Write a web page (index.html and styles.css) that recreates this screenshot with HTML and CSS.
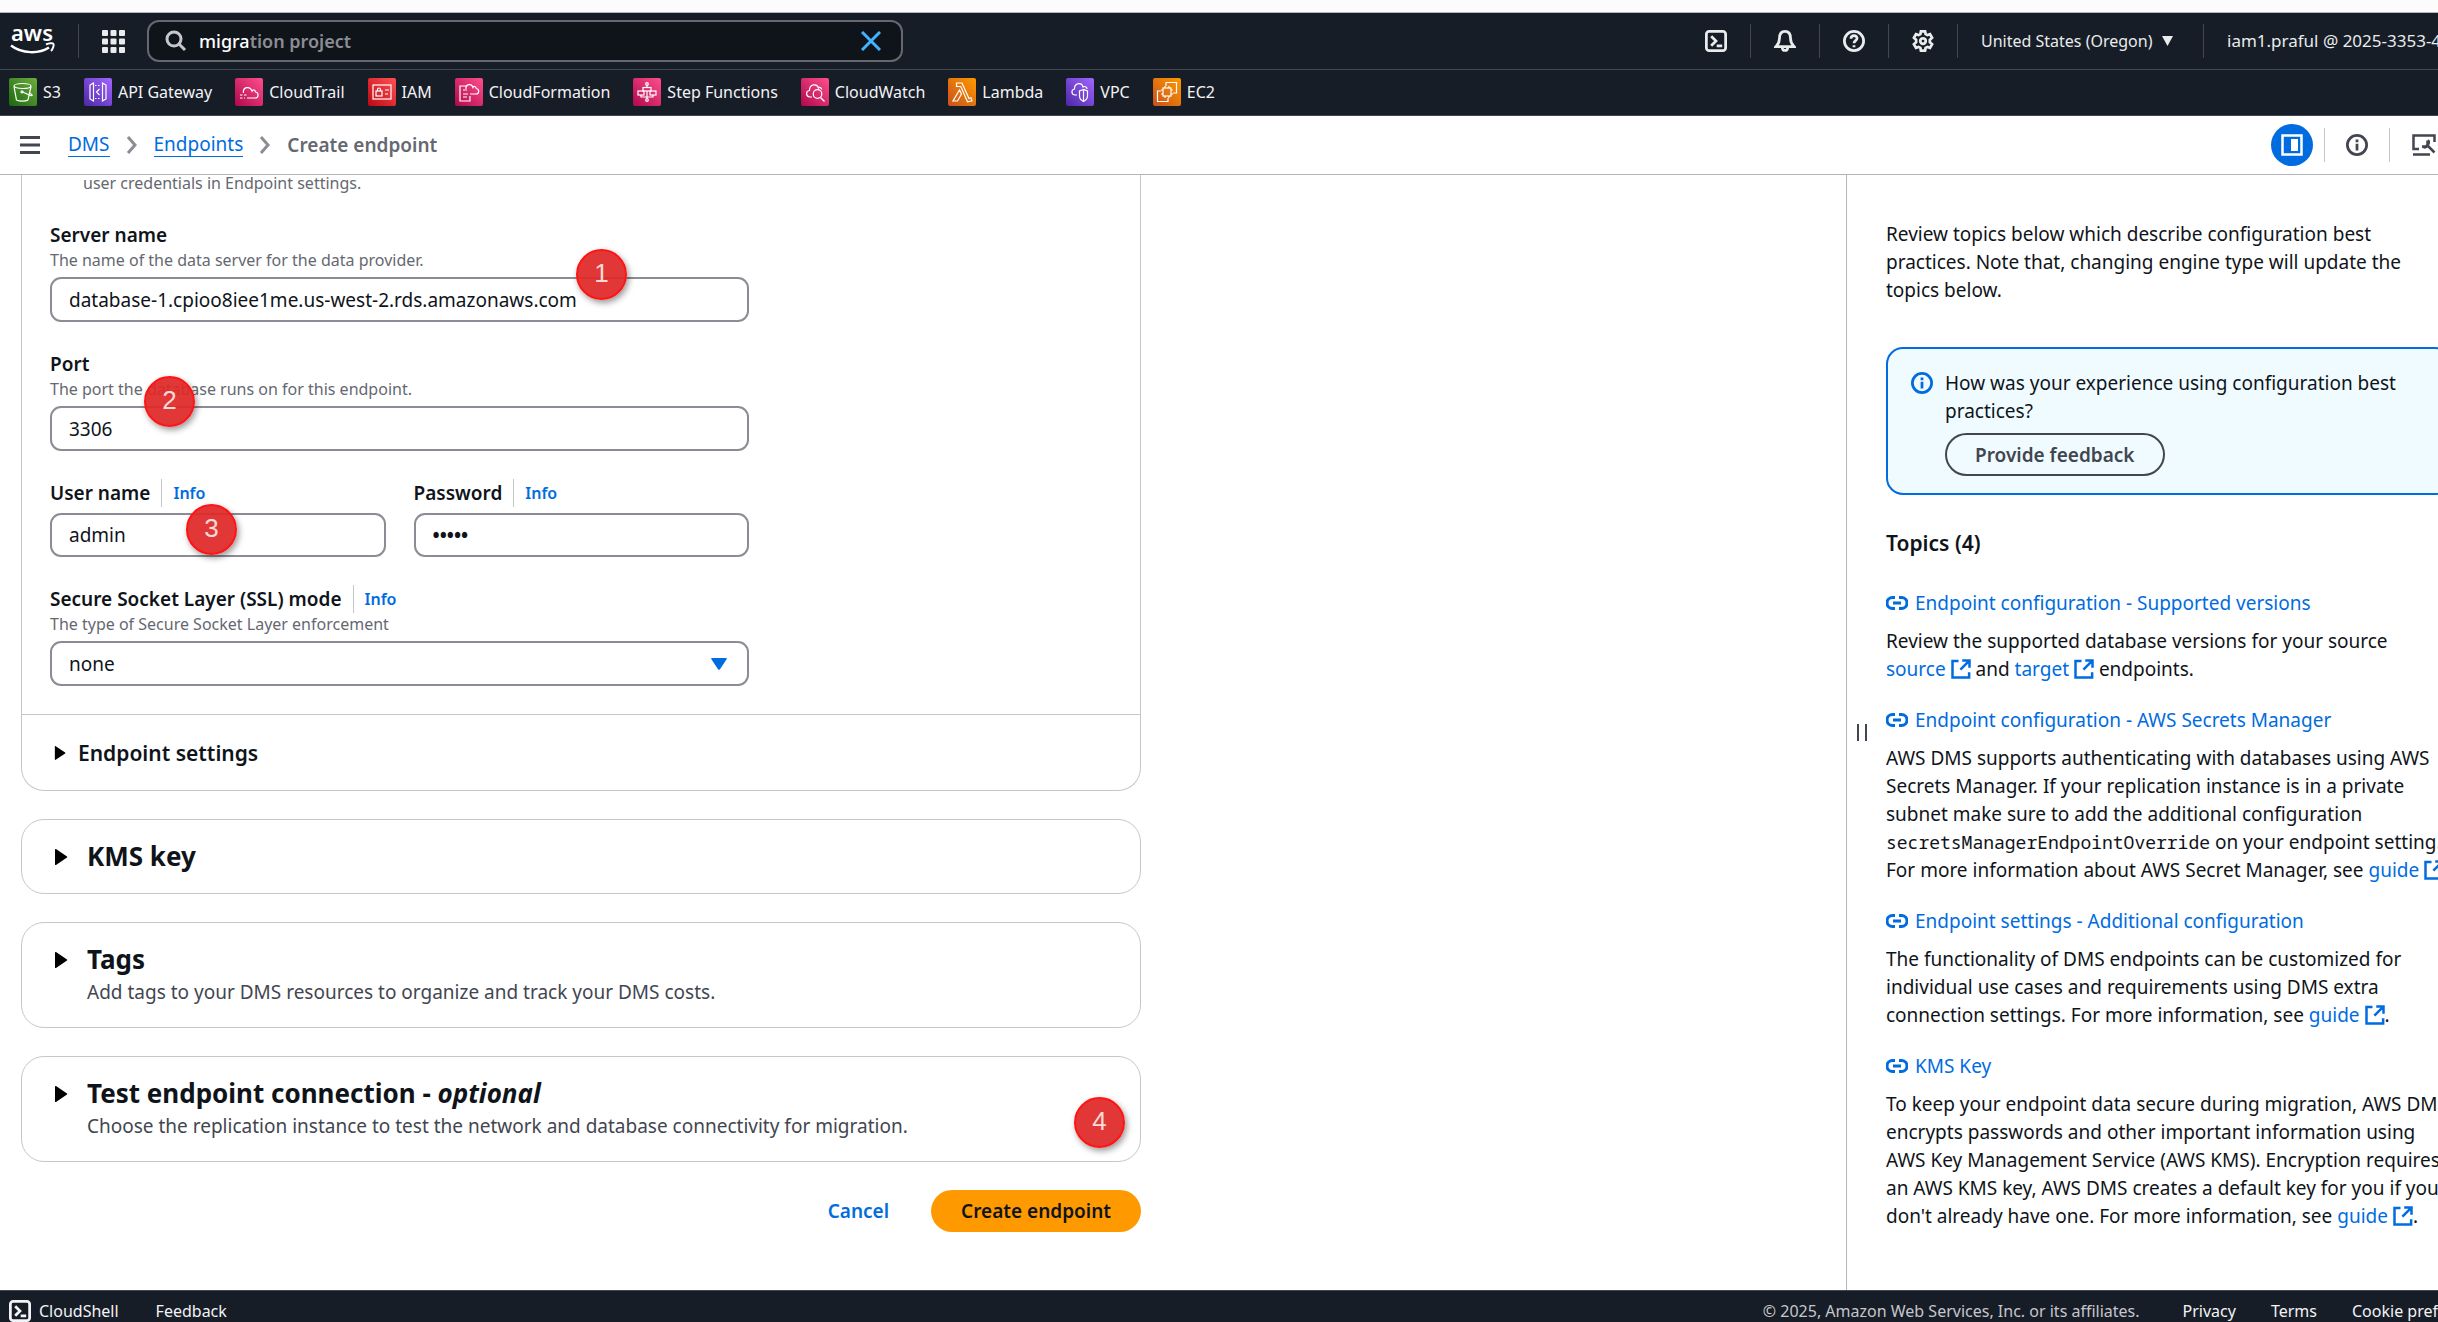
FILE: index.html
```html
<!DOCTYPE html>
<html lang="en">
<head>
<meta charset="utf-8">
<title>Create endpoint | DMS</title>
<link rel="stylesheet" href="styles.css">
</head>
<body>
<svg class="defs" aria-hidden="true">
  <symbol id="i-shell" viewBox="0 0 16 16"><rect x="1" y="1" width="14" height="14" rx="2"/><path d="M4.5 4.5 8 8l-3.500 3.500M8.500 11.500h4"/></symbol>
  <symbol id="i-ext" viewBox="0 0 16 16"><path d="M6 1.500H1.200v13.300h13.300V10.500M9 1.200h5.800V7M14.500 1.500 7.500 8.500"/></symbol>
  <symbol id="i-link" viewBox="0 0 22 16"><path d="M9 2.500H6.500a5.500 5.500 0 0 0 0 11H9M13 2.500h2.500a5.500 5.500 0 0 1 0 11H13M7 8h8"/></symbol>
  <symbol id="i-info" viewBox="0 0 16 16"><circle cx="8" cy="8" r="7"/><path d="M8 7v5M8 4v2"/></symbol>
  <symbol id="i-chev" viewBox="0 0 12 18"><path d="m2 1 7 8-7 8"/></symbol>
  <symbol id="i-caret" viewBox="0 0 14 18"><path d="M1 1.500v15c0 .5.600.700 1 .4l11-7.300c.4-.3.400-.9 0-1.200L2 1.100c-.4-.3-1-.1-1 .4z"/></symbol>
</svg>
<div class="app">
  <div class="strip"></div>
  <header class="topnav">
    <a class="logo" href="#" aria-label="AWS home">
      <svg width="46" height="46" viewBox="0 0 46 46"><text x="1" y="23" class="logo-text">aws</text><path d="M1 27.500c11 8.500 28 8.500 38 2" fill="none" stroke="#fff" stroke-width="2.500"/><path d="M36 26.500c3-1.500 7-1.500 7.500-.6.600 1-.4 5-2.500 7.100" fill="none" stroke="#fff" stroke-width="2"/></svg>
    </a>
    <span class="sep"></span>
    <button class="iconbtn grid-btn" aria-label="Services">
      <svg width="23" height="23" viewBox="0 0 23 23" fill="#e9ebed"><g id="r"><rect width="6" height="6" rx="1"/><rect x="8.500" width="6" height="6" rx="1"/><rect x="17" width="6" height="6" rx="1"/></g><use href="#r" y="8.500"/><use href="#r" y="17"/></svg>
    </button>
    <div class="search">
      <svg class="ln" width="22" height="22" viewBox="0 0 22 22"><circle cx="9" cy="9" r="7" stroke-width="3"/><path d="m14 14 6 6" stroke-width="3"/></svg>
      <label class="search-text"><input class="search-input" type="text" value="migra" aria-label="Search"><span>tion project</span></label>
      <button class="iconbtn clear" aria-label="Clear search"><svg width="20" height="20" viewBox="0 0 20 20"><path d="m1 1 18 18M19 1 1 19"/></svg></button>
    </div>
    <div class="tools">
      <button class="iconbtn tool" aria-label="CloudShell"><svg class="ln" width="22" height="22"><use href="#i-shell"/></svg></button>
      <button class="iconbtn tool" aria-label="Notifications"><svg class="ln" width="22" height="22" viewBox="0 0 16 16"><path d="M8 1C5 1 4 3.500 4 6c0 3-1 4.500-2.500 6h13C13 10.500 12 9 12 6c0-2.500-1-5-4-5zM6 12.500c0 3.200 4 3.200 4 0"/></svg></button>
      <button class="iconbtn tool" aria-label="Help"><svg class="ln" width="22" height="22" viewBox="0 0 16 16"><circle cx="8" cy="8" r="7"/><path d="M5.800 6.400C5.800 3.300 10.300 3.500 10.200 6.200 10.100 7.700 8 7.800 8 9.600M8 11v1.600"/></svg></button>
      <button class="iconbtn tool" aria-label="Settings"><svg class="ln" width="22" height="22" viewBox="0 0 16 16"><path d="M6.500 1h3l.4 2 1.300.700 1.900-.7 1.500 2.600L13 7.200v1.600l1.600 1.600-1.500 2.600-1.900-.7-1.300.700-.4 2h-3l-.4-2-1.300-.7-1.900.7-1.500-2.600L3 8.800V7.200L1.400 5.600 2.900 3l1.900.7L6.100 3z"/><circle cx="8" cy="8" r="2"/></svg></button>
      <button class="navtext region">United States (Oregon)<svg width="11" height="10" viewBox="0 0 11 10" fill="#e9ebed"><path d="M0 0h11L5.500 10z"/></svg></button>
      <button class="navtext account">iam1.praful @ 2025-3353-4</button>
    </div>
  </header>
  <nav class="favorites" aria-label="Favorites">
    <a href="#"><svg class="svc green" viewBox="0 0 28 28"><path d="M5 8.500 7.500 22c3 1.600 9 1.600 11.500 0L22 8.500"/><ellipse cx="13.500" cy="8" rx="8.500" ry="2.500"/><path d="m13.500 14 8 3.500c3 .5 1.500-1-1-2.500"/><circle cx="13" cy="13.800" r="1"/></svg>S3</a>
    <a href="#"><svg class="svc purple" viewBox="0 0 28 28"><path d="M9.500 5 6 7v14l3.500 2zM18.500 5 22 7v14l-3.500 2zM15.500 11l-3 3 3 3"/><path d="M11 7.500h6M11 20.500h6" stroke-dasharray="1.500 1.500"/></svg>API Gateway</a>
    <a href="#"><svg class="svc pink" viewBox="0 0 28 28"><path d="M12 20h8c4 0 4-5.500.5-6-.5-3-3-2.500-3.500-1-2-5.500-9.500-4-8.500 2"/><path d="M5 17h7M5 20h5" stroke-dasharray="2.500 1.500"/></svg>CloudTrail</a>
    <a href="#"><svg class="svc red" viewBox="0 0 28 28"><rect x="5" y="7" width="18" height="14"/><rect x="8" y="13" width="6" height="5"/><path d="M9.500 13v-1.500c0-2 3-2 3 0V13M17 12h4M17 16h3"/></svg>IAM</a>
    <a href="#"><svg class="svc pink" viewBox="0 0 28 28"><path d="M12 8H5v15h10v-5M8 12h4M8 16h5M8 19h4M15 16h6c3.500 0 3.500-5 .3-5.500-.4-2.500-2.600-2.500-3.300-1-1.500-4.500-7.500-3.500-7 1.500"/></svg>CloudFormation</a>
    <a href="#"><svg class="svc pink" viewBox="0 0 28 28"><circle cx="14" cy="6" r="1.300"/><circle cx="14" cy="22" r="1.300"/><rect x="10" y="9.500" width="8" height="3.500"/><rect x="5" y="13" width="6" height="4"/><rect x="17" y="13" width="6" height="4"/><path d="M14 7.500v2M14 13v7.500M8 17v2h12v-2"/></svg>Step Functions</a>
    <a href="#"><svg class="svc pink" viewBox="0 0 28 28"><path d="M11 19H9c-4.500-.5-4.500-6-.5-6.500C8.500 6 16 5 17.500 10c1-1 3-.5 3.200 1.500"/><circle cx="16.500" cy="16" r="4.300"/><path d="m19.500 19.500 4 4"/></svg>CloudWatch</a>
    <a href="#"><svg class="svc orange" viewBox="0 0 28 28"><path d="M8.500 5H14l7 15.500 2-.7 1 3-4.500 1L12.800 8.500H8.500zM11.500 12l2 4L9.500 23H5z"/></svg>Lambda</a>
    <a href="#"><svg class="svc purple" viewBox="0 0 28 28"><path d="M11 17H9c-4-.5-4-5.500-.5-6C8.500 4.500 16 4 17 9c1.500-1 4-.5 4 2"/><path d="M17.500 11.500 13.500 13v5c0 3 2 4.500 4 5.500 2-1 4-2.500 4-5.500v-5zM17.500 12v11"/></svg>VPC</a>
    <a href="#"><svg class="svc orange" viewBox="0 0 28 28"><path d="M13 8V4.500h10.500V15H20M8 13H4.500v10.500H15V20"/><rect x="10" y="10" width="8" height="8"/><path d="M12 10V8m4 2V8m-4 12v-2m4 2v-2m-6-6H8m2 4H8m12-4h-2m2 4h-2"/></svg>EC2</a>
  </nav>
  <div class="crumbs">
    <button class="iconbtn menu" aria-label="Open navigation"><svg width="20" height="18" viewBox="0 0 20 18"><path d="M0 1.500h20M0 9h20M0 16.500h20"/></svg></button>
    <nav class="trail" aria-label="Breadcrumb">
      <a href="#">DMS</a><svg class="chev" width="12" height="18"><use href="#i-chev"/></svg><a href="#">Endpoints</a><svg class="chev" width="12" height="18"><use href="#i-chev"/></svg><span class="here">Create endpoint</span>
    </nav>
    <div class="panel-tools">
      <button class="iconbtn round" aria-label="Help panel"><svg width="22" height="22" viewBox="0 0 22 22"><rect x="1.500" y="1.500" width="19" height="19" fill="none" stroke="#fff" stroke-width="2.500"/><rect x="10" y="5" width="7" height="12" fill="#fff"/></svg></button>
      <button class="iconbtn ptool" aria-label="Info"><svg class="ln" width="22" height="22"><use href="#i-info"/></svg></button>
      <button class="iconbtn ptool" aria-label="Tools"><svg class="ln" width="24" height="22" viewBox="0 0 24 22"><path d="M7 15H1.500V1.500h21V8M1 20.500h17" stroke-width="2.500"/><path d="m22.500 18.500-7-7M15.500 6.500v4l-1.500 2h-4M15.500 11.500c-1 2-3 2.500-5 1M15 11c2-1 2.500-3 1-5" stroke-width="2.500"/></svg></button>
    </div>
  </div>
  <div class="body">
    <main class="content">
      <form class="form">
        <section class="card first">
          <div class="fields">
            <p class="hint carry">user credentials in Endpoint settings.</p>
            <div class="field">
              <label for="server">Server name</label>
              <p class="hint">The name of the data server for the data provider.</p>
              <input id="server" class="box" type="text" value="database-1.cpioo8iee1me.us-west-2.rds.amazonaws.com">
              <span class="badge b1">1</span>
            </div>
            <div class="field">
              <label for="port">Port</label>
              <p class="hint">The port the database runs on for this endpoint.</p>
              <input id="port" class="box" type="text" value="3306">
              <span class="badge b2">2</span>
            </div>
            <div class="pair">
              <div class="field">
                <div class="label-row"><label for="user">User name</label><a class="info" href="#">Info</a></div>
                <input id="user" class="box" type="text" value="admin">
                <span class="badge b3">3</span>
              </div>
              <div class="field">
                <div class="label-row"><label for="pass">Password</label><a class="info" href="#">Info</a></div>
                <input id="pass" class="box" type="password" value="admin">
              </div>
            </div>
            <div class="field">
              <div class="label-row"><label for="ssl">Secure Socket Layer (SSL) mode</label><a class="info" href="#">Info</a></div>
              <p class="hint">The type of Secure Socket Layer enforcement</p>
              <div class="select-wrap"><select id="ssl" class="box"><option>none</option></select><svg width="16" height="12" viewBox="0 0 16 12"><path d="M1 0h14c.7 0 1 .6.600 1.200L8.800 11.400c-.4.6-1.200.6-1.600 0L.4 1.200C0 .6.300 0 1 0z"/></svg></div>
            </div>
          </div>
          <button type="button" class="expander small"><svg width="12" height="16"><use href="#i-caret"/></svg>Endpoint settings</button>
        </section>
        <section class="card">
          <button type="button" class="expander"><svg width="14" height="18"><use href="#i-caret"/></svg><span class="title">KMS key</span></button>
        </section>
        <section class="card">
          <button type="button" class="expander"><svg width="14" height="18"><use href="#i-caret"/></svg><span class="title">Tags</span><span class="desc">Add tags to your DMS resources to organize and track your DMS costs.</span></button>
        </section>
        <section class="card">
          <button type="button" class="expander"><svg width="14" height="18"><use href="#i-caret"/></svg><span class="title">Test endpoint connection - <i>optional</i></span><span class="desc">Choose the replication instance to test the network and database connectivity for migration.</span></button>
          <span class="badge b4">4</span>
        </section>
        <div class="actions">
          <button type="button" class="btn link">Cancel</button>
          <button type="button" class="btn primary">Create endpoint</button>
        </div>
      </form>
    </main>
    <aside class="help">
      <button class="iconbtn handle" aria-label="Resize panel"><svg width="10" height="17" viewBox="0 0 10 17"><path d="M1 0v17M9 0v17"/></svg></button>
      <div class="help-body">
        <p>Review topics below which describe configuration best practices. Note that, changing engine type will update the topics below.</p>
        <div class="alert">
          <svg class="ln" width="22" height="22"><use href="#i-info"/></svg>
          <div>
            <p>How was your experience using configuration best practices?</p>
            <button class="btn outline">Provide feedback</button>
          </div>
        </div>
        <h3>Topics (4)</h3>
        <h4><a href="#"><svg class="ln" width="22" height="16"><use href="#i-link"/></svg>Endpoint configuration - Supported versions</a></h4>
        <p>Review the supported database versions for your source <a class="ext" href="#">source <svg class="ln" width="20" height="20"><use href="#i-ext"/></svg></a> and <a class="ext" href="#">target <svg class="ln" width="20" height="20"><use href="#i-ext"/></svg></a> endpoints.</p>
        <h4><a href="#"><svg class="ln" width="22" height="16"><use href="#i-link"/></svg>Endpoint configuration - AWS Secrets Manager</a></h4>
        <p>AWS DMS supports authenticating with databases using AWS Secrets Manager. If your replication instance is in a private subnet make sure to add the additional configuration <code>secretsManagerEndpointOverride</code> on your endpoint setting. For more information about AWS Secret Manager, see <a class="ext" href="#">guide <svg class="ln" width="20" height="20"><use href="#i-ext"/></svg></a></p>
        <h4><a href="#"><svg class="ln" width="22" height="16"><use href="#i-link"/></svg>Endpoint settings - Additional configuration</a></h4>
        <p>The functionality of DMS endpoints can be customized for individual use cases and requirements using DMS extra connection settings. For more information, see <a class="ext" href="#">guide <svg class="ln" width="20" height="20"><use href="#i-ext"/></svg></a>.</p>
        <h4><a href="#"><svg class="ln" width="22" height="16"><use href="#i-link"/></svg>KMS Key</a></h4>
        <p>To keep your endpoint data secure during migration, AWS DMS encrypts passwords and other important information using AWS Key Management Service (AWS KMS). Encryption requires an AWS KMS key, AWS DMS creates a default key for you if you don't already have one. For more information, see <a class="ext" href="#">guide <svg class="ln" width="20" height="20"><use href="#i-ext"/></svg></a>.</p>
      </div>
    </aside>
  </div>
  <footer class="footer">
    <button class="foot-btn"><svg class="ln" width="22" height="22"><use href="#i-shell"/></svg>CloudShell</button>
    <button class="foot-btn feedback">Feedback</button>
    <span class="copy">© 2025, Amazon Web Services, Inc. or its affiliates.</span>
    <a href="#">Privacy</a><a href="#">Terms</a><a class="cookie" href="#">Cookie pref</a>
  </footer>
</div>
</body>
</html>
```
FILE: styles.css
```css
* { box-sizing: border-box; margin: 0; padding: 0; }
body { font: 19px/28px "Noto Sans", "Open Sans", sans-serif; color: #0f141a; background: #fff; overflow: hidden; }
button, input, select { font: inherit; color: inherit; background: none; border: 0; }
a { color: #006ce0; text-decoration: none; }
svg { display: block; flex: none; }
.defs { position: absolute; width: 0; height: 0; }
.ln { fill: none; stroke: currentColor; stroke-width: 2; }
.iconbtn { display: flex; align-items: center; justify-content: center; }

.app { display: flex; flex-direction: column; height: 100vh; }
.strip { height: 13px; flex: none; background: #fcfcfd; border-bottom: 1px solid #b5b8bd; }

.topnav { display: flex; align-items: center; flex: none; height: 57px; padding-left: 10px; background: #161d26; border-bottom: 1px solid #424650; color: #e9ebed; font-size: 16px; }
.logo { width: 68px; }
.logo-text { font: 600 22px "Noto Sans", sans-serif; fill: #fff; }
.sep { width: 1px; height: 34px; background: #424650; }
.grid-btn { width: 68px; }
.search { display: flex; align-items: center; width: 756px; height: 42px; padding: 0 20px 0 16px; border: 2px solid #656871; border-radius: 12px; background: #0f141a; color: #c6c6cd; }
.search-text { display: flex; flex: 1; margin-left: 12px; font-size: 18px; color: #8c8c94; }
.search-input { field-sizing: content; color: #fff; font-weight: 500; }
.clear svg { stroke: #42b4ff; stroke-width: 3; }
.tools { display: flex; align-items: center; margin-left: auto; }
.tool { width: 69px; height: 34px; border-right: 1px solid #424650; }
.navtext { height: 34px; display: flex; align-items: center; white-space: nowrap; }
.region { gap: 9px; width: 246px; padding-left: 23px; border-right: 1px solid #424650; }
.account { width: 234px; padding-left: 23px; overflow: hidden; font-size: 17px; }

.favorites { display: flex; align-items: center; gap: 23px; flex: none; height: 46px; padding: 0 9px 2px; background: #161d26; border-bottom: 1px solid #424650; font-size: 16px; }
.favorites a { display: flex; align-items: center; gap: 6px; color: #f3f3f7; }
.svc { width: 28px; height: 28px; border-radius: 2px; fill: none; stroke: #fff; stroke-width: 1.2px; }
.green { background: linear-gradient(45deg, #1b660f, #6cae3e); }
.purple { background: linear-gradient(45deg, #4d27a8, #a166ff); }
.pink { background: linear-gradient(45deg, #b0084d, #ff4f8b); }
.red { background: linear-gradient(45deg, #bd0816, #ff5252); }
.orange { background: linear-gradient(45deg, #c8511b, #ff9900); }

.crumbs { display: flex; align-items: center; flex: none; height: 59px; border-bottom: 1px solid #b4b4bb; }
.menu { width: 20px; margin: 0 28px 0 20px; }
.menu svg { stroke: #424650; stroke-width: 3; }
.trail { display: flex; align-items: center; }
.trail a { line-height: 23px; border-bottom: 1px solid #006ce0; }
.chev { margin: 0 16px; fill: none; stroke: #8c8c94; stroke-width: 3; }
.here { font-weight: 600; color: #656871; }
.panel-tools { display: flex; align-items: center; margin-left: auto; color: #424650; }
.round { width: 42px; height: 42px; margin-right: 11px; border-radius: 50%; background: #006ce0; }
.ptool { width: 65px; height: 34px; border-left: 1px solid #c6c6cd; }
.ptool:last-child { width: 49px; padding-left: 20px; }

.body { display: flex; flex: 1; min-height: 0; overflow: hidden; }
.content { flex: 1; padding: 0 21px; min-width: 0; }
.form { max-width: 1120px; display: flex; flex-direction: column; gap: 28px; }
.card { position: relative; border: 1px solid #c6c6cd; border-radius: 23px; }
.first { border-top: 0; border-radius: 0 0 23px 23px; }
.fields { display: flex; flex-direction: column; gap: 28px; max-width: 755px; padding: 0 28px 28px; }
.hint { font-size: 16px; line-height: 22px; color: #656871; }
.carry { line-height: 16px; padding: 0 0 2px 33px; }
.field { position: relative; display: flex; flex-direction: column; flex: 1; }
label { font-weight: 600; }
.label-row { display: flex; }
.info { margin-left: 11px; padding-left: 11px; border-left: 1px solid #c6c6cd; font-size: 16px; font-weight: 600; }
.box { width: 100%; height: 45px; margin-top: 6px; padding: 0 17px; border: 2px solid #8c8c94; border-radius: 11px; background: #fff; }
.box[type="password"] { font-weight: 700; }
.pair { display: flex; gap: 28px; }
.pair .box { height: 44px; }
.select-wrap { position: relative; }
.select-wrap .box { display: block; appearance: none; }
.select-wrap svg { position: absolute; right: 22px; bottom: 16px; fill: #006ce0; pointer-events: none; }
.expander { display: grid; grid-template-columns: 14px 1fr; column-gap: 19px; align-items: center; width: 100%; padding: 21px 32px; text-align: left; }
.small { grid-template-columns: 12px 1fr; column-gap: 12px; padding: 24px 32px 23px; border-top: 1px solid #c6c6cd; font-size: 21px; font-weight: 600; }
.title { font-size: 26px; line-height: 31px; font-weight: 700; }
.desc { grid-column: 2; margin-top: 3px; color: #424650; font-size: 19px; }
.actions { display: flex; justify-content: flex-end; gap: 12px; }
.btn { height: 42px; padding: 0 30px; border-radius: 21px; font-weight: 600; }
.link { color: #006ce0; }
.primary { background: #ff9900; }
.outline { height: 43px; margin-top: 8px; padding: 0 28px; border: 2px solid #424650; border-radius: 22px; color: #424650; }

.badge { position: absolute; width: 51px; height: 51px; border: 2px solid #ff1414; border-radius: 50%; background: rgba(224, 40, 40, .93); box-shadow: 2px 3px 6px rgba(0, 0, 0, .4); color: #fbdada; font: 26px/44px "Liberation Sans", sans-serif; text-align: center; }
.b1 { left: 526px; top: 28px; }
.b2 { left: 94px; top: 26px; }
.b3 { left: 136px; top: 25px; }
.b4 { right: 15px; bottom: 13px; }

.help { display: flex; flex: 0 0 592px; border-left: 1px solid #b4b4bb; overflow: hidden; }
.handle { flex: 0 0 39px; align-self: stretch; padding: 0 9px 0 0; }
.handle svg { stroke: #424650; stroke-width: 2; }
.help-body { flex: 0 0 566px; padding-top: 45px; }
.alert { display: flex; gap: 12px; margin: 43px 0 34px; padding: 20px 23px 17px; border: 2px solid #006ce0; border-radius: 17px; background: #f0fbff; }
.alert > svg { margin-top: 3px; color: #006ce0; }
h3 { margin-bottom: 32px; font-size: 21px; font-weight: 600; }
h4 { margin: 23px 0 10px; font-size: 19px; font-weight: 400; }
h4 a { display: flex; align-items: center; gap: 7px; }
h4 .ln { stroke-width: 3; }
.ext { white-space: nowrap; }
.ext svg { display: inline-block; vertical-align: -3px; }
code { font: 18px "Noto Sans Mono", "DejaVu Sans Mono", monospace; }

.footer { display: flex; align-items: flex-start; flex: none; height: 32px; padding: 6px 0 0 9px; overflow: hidden; background: #161d26; border-top: 1px solid #424650; color: #f3f3f7; font-size: 16px; white-space: nowrap; }
.footer a { color: inherit; margin-left: 35px; }
.foot-btn { display: flex; align-items: center; gap: 8px; }
.feedback { margin-left: 37px; }
.copy { margin: 0 8px 0 auto; color: #c6c6cd; }
.footer .cookie { width: 86px; }
```
